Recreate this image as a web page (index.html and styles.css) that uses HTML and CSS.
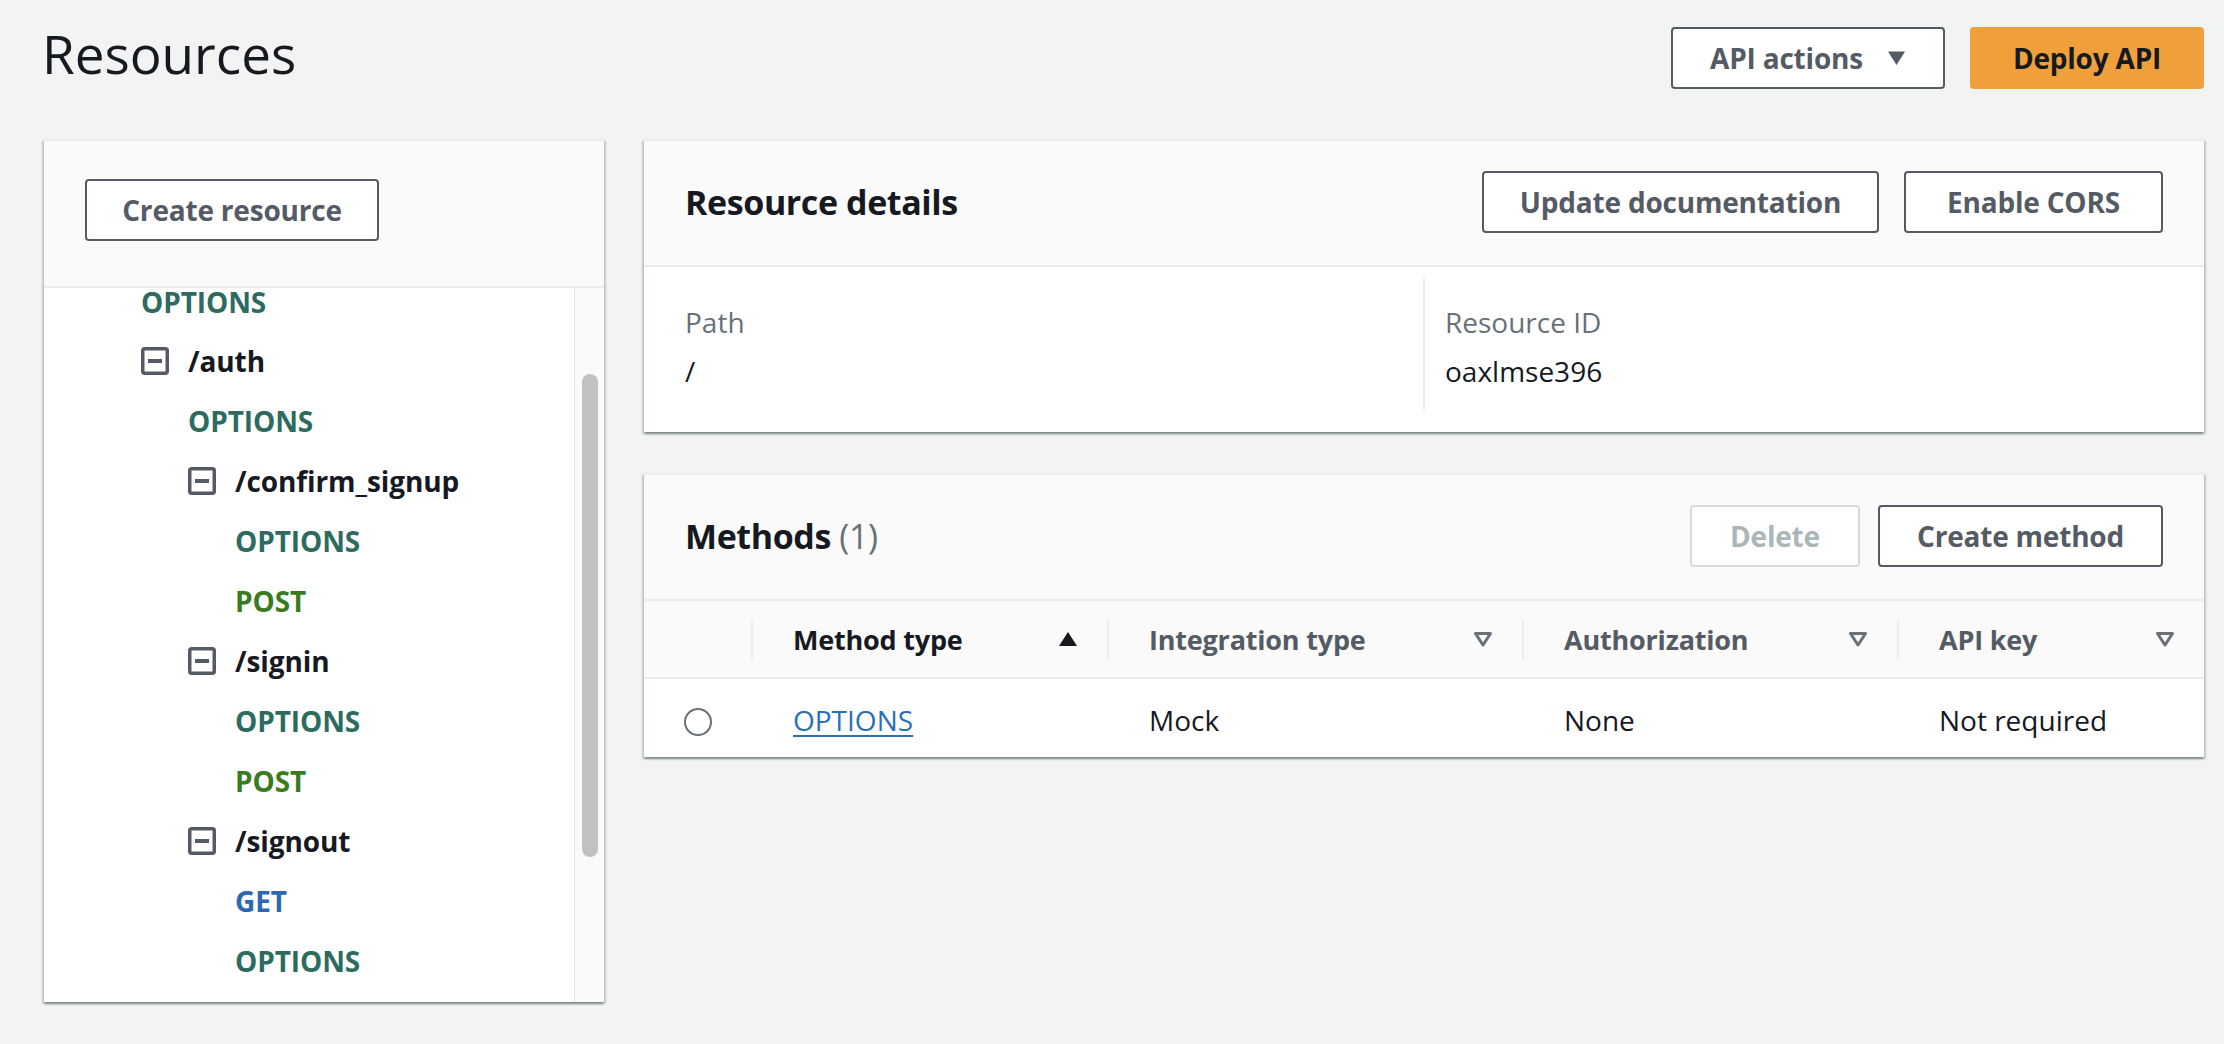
FILE: index.html
```html
<!DOCTYPE html>
<html lang="en">
<head>
<meta charset="utf-8">
<title>Resources</title>
<link rel="stylesheet" href="styles.css">
</head>
<body>
<div class="page">
  <header class="top">
    <h1 class="title">Resources</h1>
    <div class="actions">
      <button class="btn btn-normal w-actions">API actions
        <svg class="caret" width="19" height="16" viewBox="0 0 19 16"><path d="M1 1.5 H18 L9.5 15 Z" fill="#545b64"/></svg>
      </button>
      <button class="btn btn-primary w-deploy">Deploy API</button>
    </div>
  </header>

  <main class="main">
    <aside class="panel tree-panel">
      <div class="tree-head">
        <button class="btn btn-normal w-create-res">Create resource</button>
      </div>
      <div class="tree-body">
        <div class="tree-scroll">
          <ul class="tree">
            <li><div class="row row-partial m-options">OPTIONS</div></li>
            <li>
              <div class="row res"><svg class="tog" width="28" height="28" viewBox="0 0 28 28"><rect x="1.75" y="1.75" width="24.5" height="24.5" rx="2" fill="none" stroke="#545b64" stroke-width="3.5"/><rect x="7" y="12" width="14" height="4" fill="#545b64"/></svg><span>/auth</span></div>
              <ul class="children">
                <li><div class="row m-options">OPTIONS</div></li>
                <li>
                  <div class="row res"><svg class="tog" width="28" height="28" viewBox="0 0 28 28"><rect x="1.75" y="1.75" width="24.5" height="24.5" rx="2" fill="none" stroke="#545b64" stroke-width="3.5"/><rect x="7" y="12" width="14" height="4" fill="#545b64"/></svg><span>/confirm_signup</span></div>
                  <ul class="children">
                    <li><div class="row m-options">OPTIONS</div></li>
                    <li><div class="row m-post">POST</div></li>
                  </ul>
                </li>
                <li>
                  <div class="row res"><svg class="tog" width="28" height="28" viewBox="0 0 28 28"><rect x="1.75" y="1.75" width="24.5" height="24.5" rx="2" fill="none" stroke="#545b64" stroke-width="3.5"/><rect x="7" y="12" width="14" height="4" fill="#545b64"/></svg><span>/signin</span></div>
                  <ul class="children">
                    <li><div class="row m-options">OPTIONS</div></li>
                    <li><div class="row m-post">POST</div></li>
                  </ul>
                </li>
                <li>
                  <div class="row res"><svg class="tog" width="28" height="28" viewBox="0 0 28 28"><rect x="1.75" y="1.75" width="24.5" height="24.5" rx="2" fill="none" stroke="#545b64" stroke-width="3.5"/><rect x="7" y="12" width="14" height="4" fill="#545b64"/></svg><span>/signout</span></div>
                  <ul class="children">
                    <li><div class="row m-get">GET</div></li>
                    <li><div class="row m-options">OPTIONS</div></li>
                  </ul>
                </li>
              </ul>
            </li>
          </ul>
        </div>
        <div class="scrollbar"><div class="thumb"></div></div>
      </div>
    </aside>

    <section class="right">
      <div class="panel">
        <div class="panel-head">
          <h2 class="panel-title">Resource details</h2>
          <div class="btns btns-wide">
            <button class="btn btn-normal w-update">Update documentation</button>
            <button class="btn btn-normal w-cors">Enable CORS</button>
          </div>
        </div>
        <div class="details">
          <div class="col">
            <div class="label">Path</div>
            <div class="value">/</div>
          </div>
          <div class="col col-2">
            <div class="label">Resource ID</div>
            <div class="value">oaxlmse396</div>
          </div>
        </div>
      </div>

      <div class="panel">
        <div class="panel-head">
          <h2 class="panel-title">Methods <span class="count">(1)</span></h2>
          <div class="btns">
            <button class="btn btn-disabled w-delete">Delete</button>
            <button class="btn btn-normal w-create-method">Create method</button>
          </div>
        </div>
        <table class="methods">
          <colgroup>
            <col class="c-sel"><col class="c-type"><col class="c-int"><col class="c-auth"><col class="c-key">
          </colgroup>
          <thead>
            <tr>
              <th></th>
              <th><div class="th th-sorted"><span>Method type</span><svg width="20" height="16" viewBox="0 0 20 16"><path d="M10 1 L19 15 H1 Z" fill="#16191f"/></svg></div></th>
              <th><div class="th"><span>Integration type</span><svg width="20" height="16" viewBox="0 0 20 16"><path d="M2.5 2.5 H17.5 L10 14 Z" fill="none" stroke="#687078" stroke-width="3" stroke-linejoin="round"/></svg></div></th>
              <th><div class="th"><span>Authorization</span><svg width="20" height="16" viewBox="0 0 20 16"><path d="M2.5 2.5 H17.5 L10 14 Z" fill="none" stroke="#687078" stroke-width="3" stroke-linejoin="round"/></svg></div></th>
              <th><div class="th"><span>API key</span><svg width="20" height="16" viewBox="0 0 20 16"><path d="M2.5 2.5 H17.5 L10 14 Z" fill="none" stroke="#687078" stroke-width="3" stroke-linejoin="round"/></svg></div></th>
            </tr>
          </thead>
          <tbody>
            <tr>
              <td class="sel"><span class="radio"></span></td>
              <td><a class="link" href="#">OPTIONS</a></td>
              <td>Mock</td>
              <td>None</td>
              <td>Not required</td>
            </tr>
          </tbody>
        </table>
      </div>
    </section>
  </main>
</div>
</body>
</html>
```

FILE: styles.css
```css
* { box-sizing: border-box; }

html, body {
  margin: 0;
  padding: 0;
}

body {
  background: #f2f3f3;
  font-family: "Open Sans", "Noto Sans", sans-serif;
  font-size: 28px;
  color: #16191f;
  width: 2224px;
  height: 1044px;
  overflow: hidden;
}

.page {
  padding: 0 20px 0 44px;
}

/* ---------- top bar ---------- */
.top {
  display: flex;
  justify-content: space-between;
  align-items: flex-start;
  padding-top: 27px;
}

.title {
  margin: 0 0 0 -2px;
  font-size: 53px;
  font-weight: 400;
  line-height: 54px;
  color: #16191f;
}

.actions {
  display: flex;
  gap: 25px;
}

/* ---------- buttons ---------- */
.btn {
  height: 62px;
  padding: 0;
  border: 2px solid #545b64;
  border-radius: 4px;
  background: #fff;
  color: #545b64;
  font-family: "Open Sans", "Noto Sans", sans-serif;
  font-size: 28px;
  font-weight: 700;
  letter-spacing: -0.2px;
  display: inline-flex;
  align-items: center;
  justify-content: center;
  white-space: nowrap;
}

.w-actions { width: 274px; }
.w-deploy { width: 234px; }
.w-create-res { width: 294px; }
.w-update { width: 397px; }
.w-cors { width: 259px; }
.w-delete { width: 170px; }
.w-create-method { width: 285px; }

.btn .caret {
  margin-left: 24px;
}

.btn-primary {
  background: #f0a03a;
  border-color: #f0a03a;
  color: #16191f;
}

.btn-disabled {
  border-color: #d5dbdb;
  color: #aab7b8;
}

/* ---------- main ---------- */
.main {
  margin-top: 50px;
  display: grid;
  grid-template-columns: 560px 1fr;
  column-gap: 40px;
  align-items: start;
}

.panel {
  background: #fff;
  border-top: 2px solid #eaeded;
  box-shadow: 0 2px 2px 0 rgba(0, 28, 36, 0.3),
              2px 2px 2px 0 rgba(0, 28, 36, 0.15),
              -2px 2px 2px 0 rgba(0, 28, 36, 0.15);
}

/* ---------- tree panel ---------- */
.tree-panel {
  height: 863px;
  display: flex;
  flex-direction: column;
}

.tree-head {
  background: #fafafa;
  padding: 38px 41px 45px;
  border-bottom: 2px solid #eaeded;
}

.tree-body {
  flex: 1;
  display: flex;
  min-height: 0;
}

.tree-scroll {
  flex: 1;
}

.tree,
.children {
  list-style: none;
  margin: 0;
  padding: 0;
}

.tree {
  padding-left: 97px;
}

.children {
  padding-left: 47px;
}

.row {
  height: 60px;
  display: flex;
  align-items: center;
  font-weight: 700;
  font-size: 28px;
  letter-spacing: -0.1px;
  white-space: nowrap;
}

/* first row is partly scrolled out of view */
.row-partial {
  height: 43px;
  padding-bottom: 15px;
}

.row.res {
  gap: 19px;
  color: #16191f;
}

.tog {
  flex: none;
}

.m-options { color: #2d6b5f; }
.m-post { color: #3a7b1f; }
.m-get { color: #2e68b1; }

.scrollbar {
  width: 28px;
  margin-right: 2px;
  background: #fafafa;
  border-left: 1px solid #e6e6e6;
  padding: 86px 0 0 7px;
}

.thumb {
  width: 16px;
  height: 483px;
  border-radius: 8px;
  background: #c1c1c1;
}

/* ---------- right column ---------- */
.right {
  display: flex;
  flex-direction: column;
  gap: 41px;
}

.panel-head {
  background: #fafafa;
  border-bottom: 2px solid #eaeded;
  padding: 30px 41px 32px;
  display: flex;
  justify-content: space-between;
  align-items: center;
}

.panel-title {
  margin: 0;
  font-size: 34px;
  font-weight: 700;
  letter-spacing: -0.4px;
  line-height: 46px;
  color: #16191f;
}

.count {
  font-weight: 400;
  color: #687078;
}

.btns {
  display: flex;
  gap: 18px;
}

.btns-wide {
  gap: 25px;
}

.details {
  display: grid;
  grid-template-columns: 738px 1fr;
  padding: 11px 41px 22px;
}

.col {
  padding: 22px 0 17px;
}

.col-2 {
  border-left: 2px solid #eaeded;
  padding-left: 20px;
}

.label {
  line-height: 44px;
  color: #687078;
}

.value {
  margin-top: 5px;
  line-height: 44px;
  color: #16191f;
}

/* ---------- methods table ---------- */
.methods {
  width: 100%;
  border-collapse: collapse;
  table-layout: fixed;
}

.c-sel { width: 107px; }
.c-type { width: 356px; }
.c-int { width: 415px; }
.c-auth { width: 375px; }
.c-key { width: 307px; }

.methods th {
  height: 77px;
  padding: 0;
  background: #fafafa;
  border-bottom: 2px solid #eaeded;
  text-align: left;
  font-weight: 700;
  font-size: 27px;
  letter-spacing: -0.2px;
  color: #545b64;
}

.th {
  height: 39px;
  border-left: 2px solid #eaeded;
  padding: 0 29px 0 40px;
  display: flex;
  align-items: center;
  justify-content: space-between;
}

.th-sorted {
  color: #16191f;
}

.methods td {
  height: 79px;
  padding: 4px 0 0 42px;
  color: #16191f;
  white-space: nowrap;
}

.methods td.sel {
  padding: 0;
  text-align: center;
}

.radio {
  display: inline-block;
  width: 28px;
  height: 28px;
  border: 2px solid #687078;
  border-radius: 50%;
  vertical-align: middle;
}

.link {
  color: #2a6fbb;
  text-decoration: underline;
  text-decoration-thickness: 2px;
  text-underline-offset: 4px;
}
```
